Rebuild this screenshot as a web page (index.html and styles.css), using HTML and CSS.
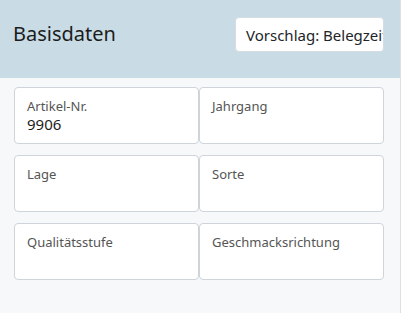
FILE: index.html
```html
<!DOCTYPE html>
<html lang="de">
<head>
  <meta charset="UTF-8" />
  <title>Basisdaten</title>
  <link rel="stylesheet" href="styles.css">
</head>
<body>
  <div class="panel">
    <header>
      <h1>Basisdaten</h1>
      <button class="suggest">Vorschlag: Belegzeitraum</button>
    </header>

    <div class="fields">
      <div class="field">
        <label>Artikel-Nr.</label>
        <div class="value">9906</div>
      </div>
      <div class="field">
        <label>Jahrgang</label>
        <div class="value"></div>
      </div>
      <div class="field">
        <label>Lage</label>
        <div class="value"></div>
      </div>
      <div class="field">
        <label>Sorte</label>
        <div class="value"></div>
      </div>
      <div class="field">
        <label>Qualitätsstufe</label>
        <div class="value"></div>
      </div>
      <div class="field">
        <label>Geschmacksrichtung</label>
        <div class="value"></div>
      </div>
    </div>
  </div>
</body>
</html>
```

FILE: styles.css
```css
* {
  margin: 0;
  padding: 0;
  box-sizing: border-box;
  font-family: 'Noto Sans', sans-serif;
}
body {
  background: #fff;
  color: #212529;
}
.panel {
  width: 401px;
  height: 313px;
  background: #f7f8fa;
  border-right: 1px solid #dde1e6;
}
header {
  background: #c9dce6;
  height: 78px;
  display: flex;
  justify-content: space-between;
  align-items: center;
  padding: 0 16px 0 13px;
}
h1 {
  font-size: 20px;
  font-weight: normal;
  color: #1c1c1c;
  margin-top: -11px;
}
.suggest {
  width: 149px;
  height: 35px;
  margin-top: -9px;
  background: #fff;
  border: 1px solid #d6dde2;
  border-radius: 4px;
  font-size: 15px;
  color: #212529;
  text-align: left;
  padding: 0 10px;
  white-space: nowrap;
  overflow: hidden;
}
.fields {
  display: grid;
  grid-template-columns: 185px 185px;
  column-gap: 0;
  row-gap: 11px;
  padding: 9px 0 0 14px;
}
.field {
  height: 57px;
  background: #fff;
  border: 1px solid #ced4da;
  border-radius: 4px;
  padding: 9px 12px;
}
.field label {
  display: block;
  font-size: 13px;
  color: #555;
  line-height: 18px;
}
.field .value {
  font-size: 15px;
  color: #1c1c1c;
  line-height: 19px;
}
```
